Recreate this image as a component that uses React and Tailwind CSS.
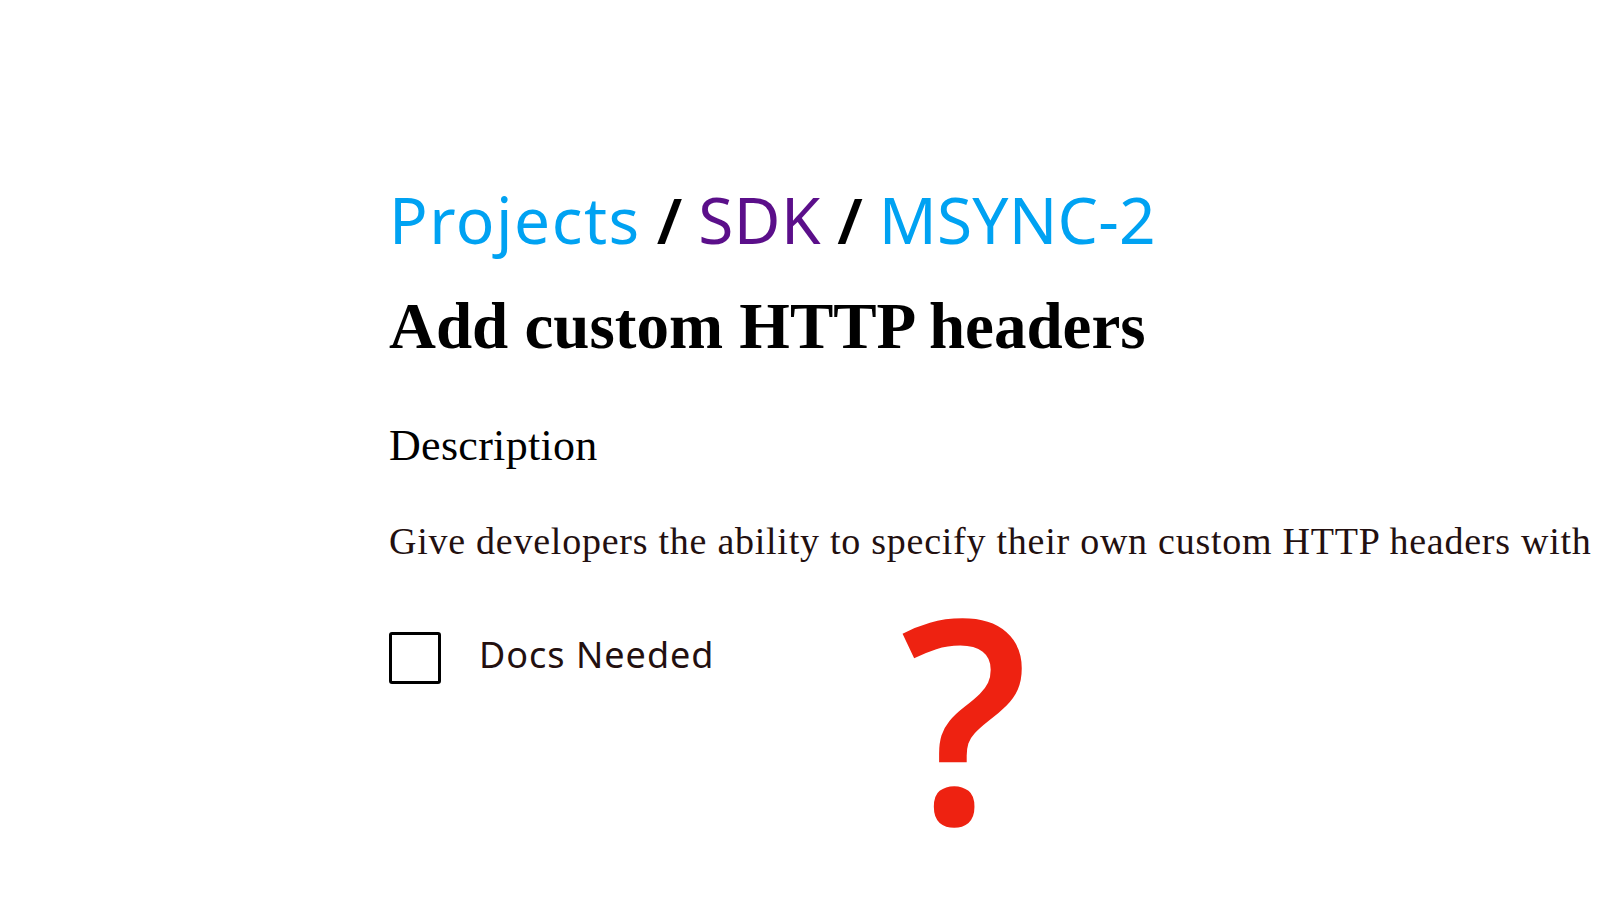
export default function App() {
  return (
    <div className="relative min-h-screen w-full overflow-hidden bg-white">
      <div className="flex flex-col pl-[389px] pt-[188px]">
        <nav className="flex items-baseline whitespace-nowrap font-['Noto_Sans',sans-serif] text-[64px] leading-none">
          <span className="tracking-[1.5px] text-[#00a2f2]">Projects</span>
          <span className="mx-[16px] font-semibold text-black">/</span>
          <span className="tracking-[0.5px] text-[#5b0f8a]">SDK</span>
          <span className="mx-[16px] font-semibold text-black">/</span>
          <span className="tracking-[0.2px] text-[#00a2f2]">MSYNC-2</span>
        </nav>

        <h1 className="mt-[42px] whitespace-nowrap font-['Liberation_Serif',serif] text-[65px] font-bold leading-none text-black">
          Add custom HTTP headers
        </h1>

        <h2 className="mt-[65px] font-['Liberation_Serif',serif] text-[44px] leading-none tracking-[0.3px] text-black">
          Description
        </h2>

        <p className="mt-[54px] whitespace-nowrap font-['Liberation_Serif',serif] text-[38px] leading-none tracking-[0.75px] text-[#231010]">
          Give developers the ability to specify their own custom HTTP headers with
        </p>

        <label className="mt-[72px] flex items-center gap-[38px]">
          <span className="h-[52px] w-[52px] rounded-[3px] border-[3px] border-black" />
          <span className="-mt-[6px] font-['Noto_Sans',sans-serif] text-[36px] leading-none tracking-[1px] text-[#231010]">
            Docs Needed
          </span>
        </label>
      </div>

      <div className="absolute left-[900px] top-[598px] font-['Open_Sans',sans-serif] text-[284px] font-semibold leading-[0.82] text-[#ee2211]">
        ?
      </div>
    </div>
  );
}
